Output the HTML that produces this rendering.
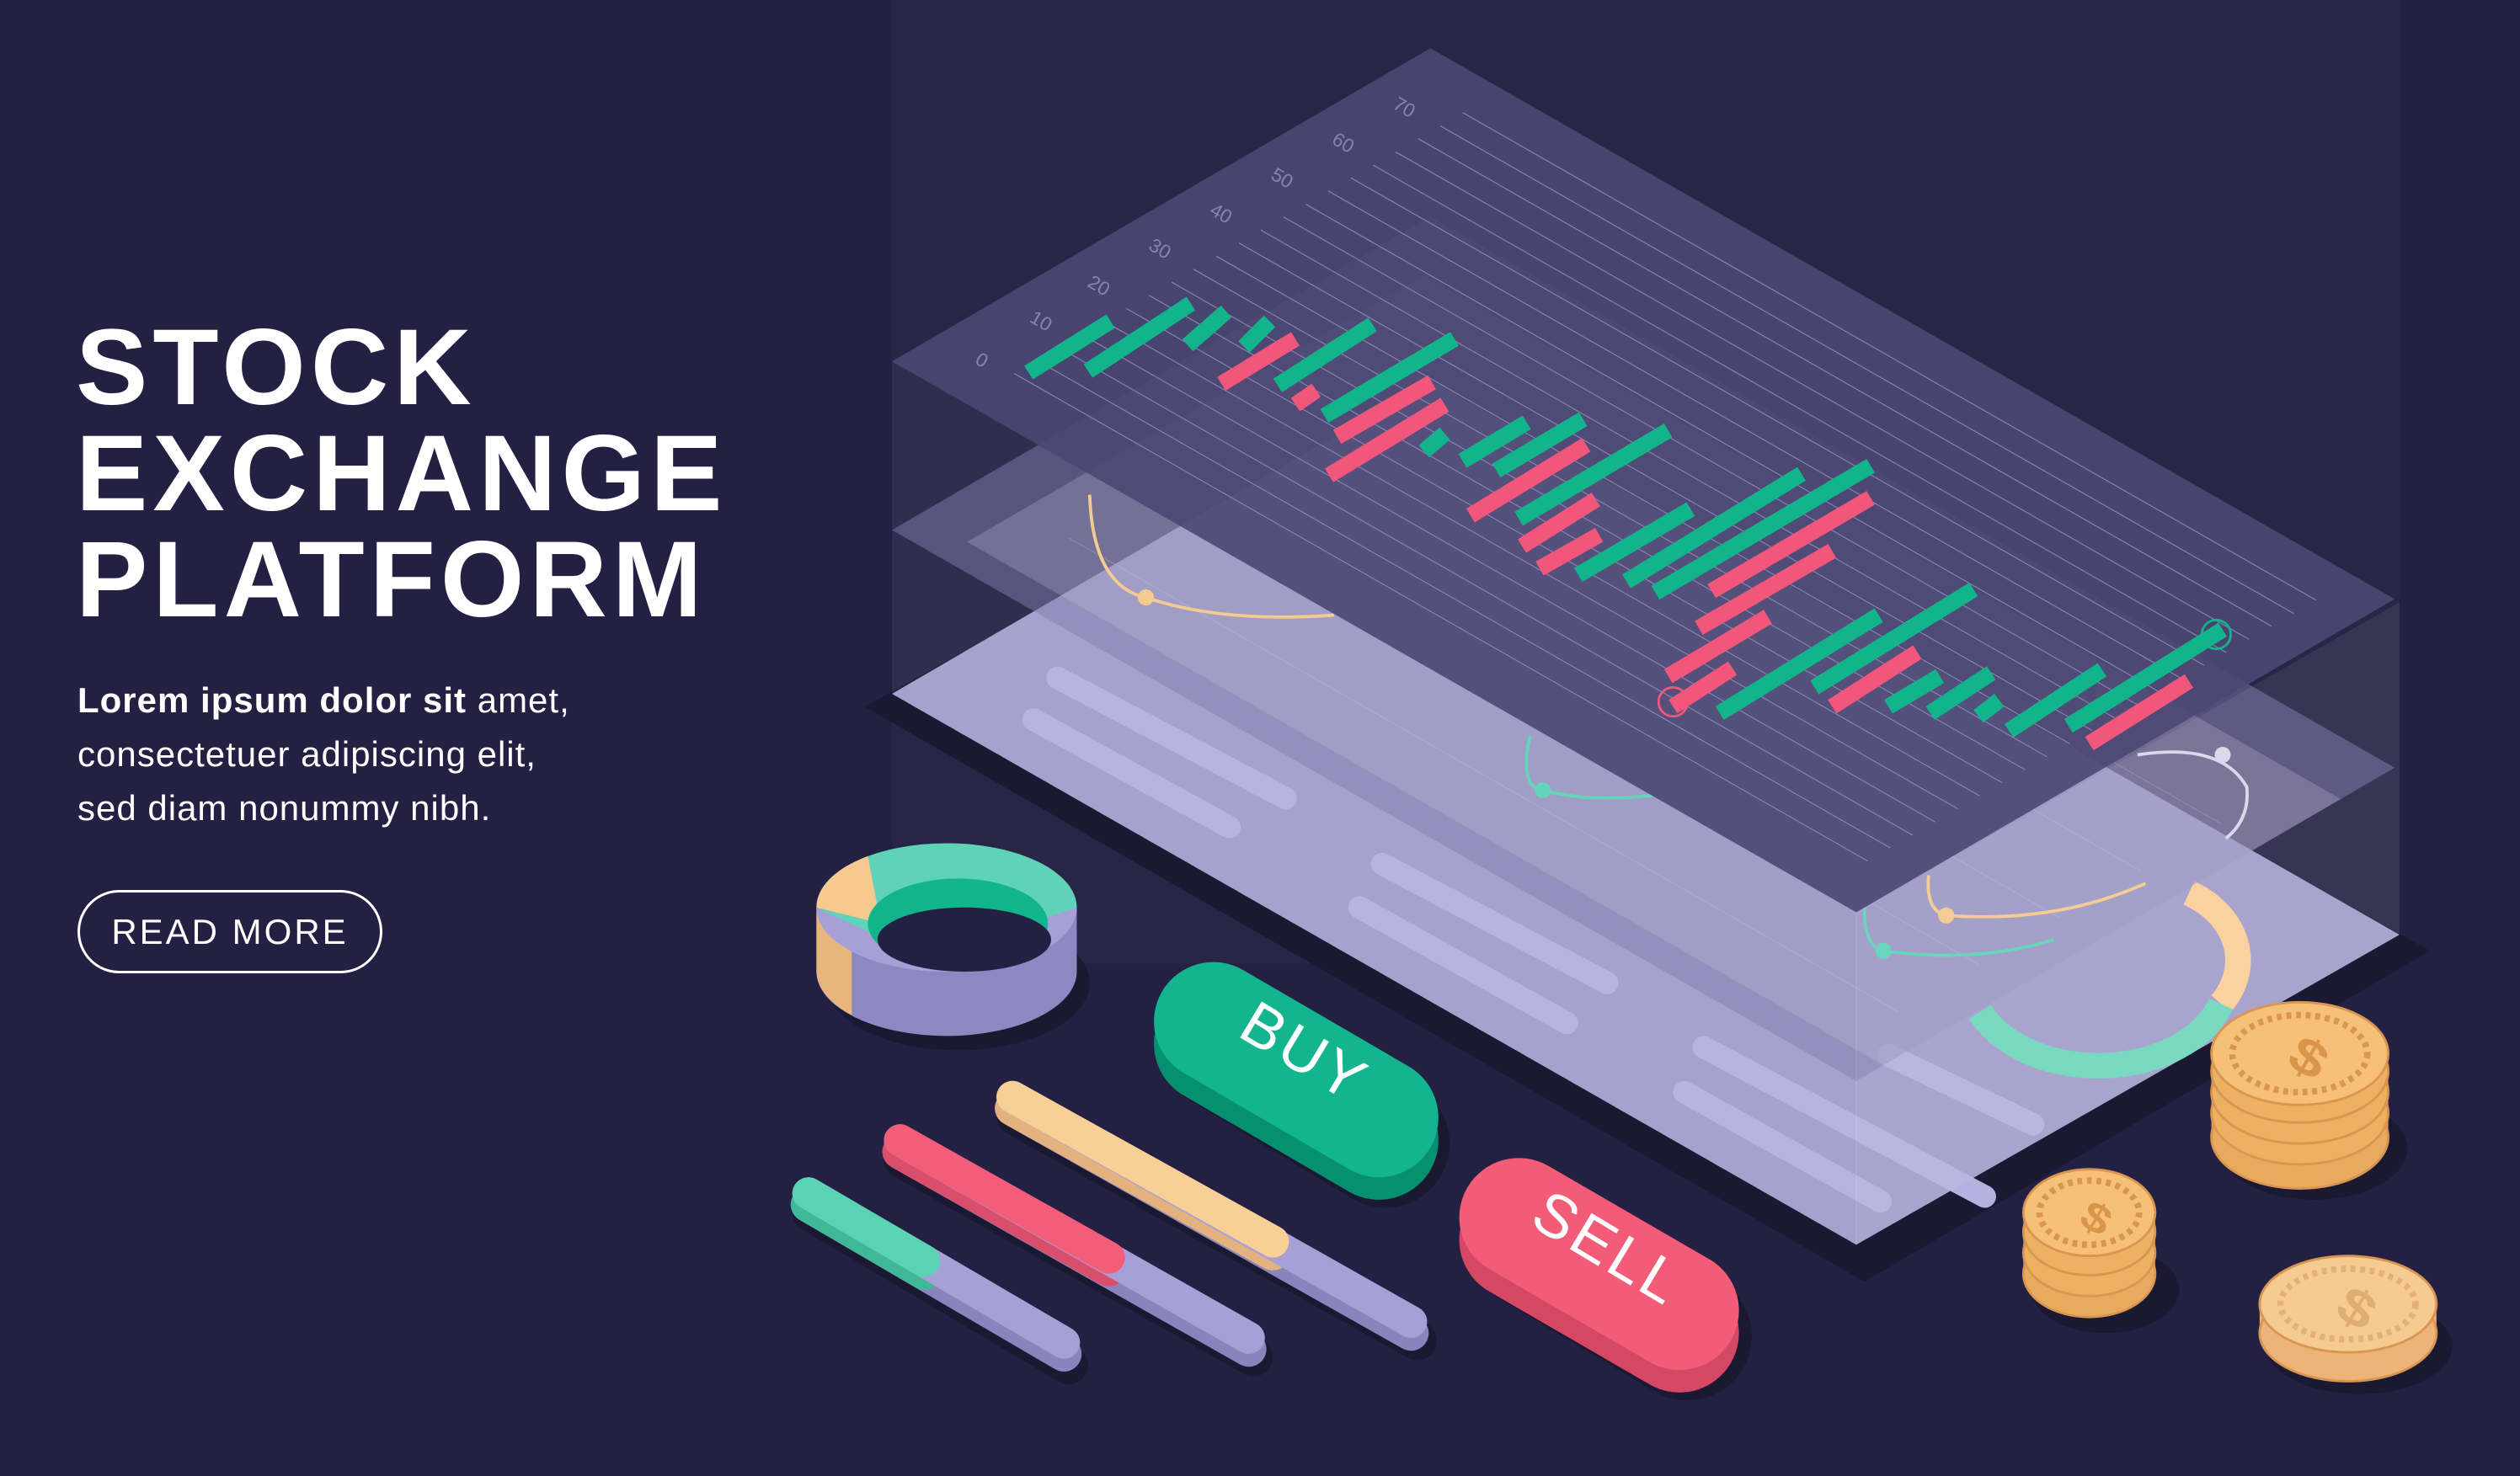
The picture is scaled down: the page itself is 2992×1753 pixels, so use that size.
<!DOCTYPE html>
<html><head><meta charset="utf-8"><style>
html,body{margin:0;padding:0;}
body{width:2992px;height:1753px;background:#242043;position:relative;overflow:hidden;font-family:"Liberation Sans",sans-serif;color:#fff;}
svg{position:absolute;left:0;top:0;}
.h{position:absolute;left:90px;top:374px;font-weight:bold;font-size:128px;line-height:126px;letter-spacing:6px;}
.p{position:absolute;left:92px;top:800px;font-size:42px;line-height:64px;letter-spacing:1px;}
.btn{position:absolute;left:92px;top:1057px;width:356px;height:93px;border:3px solid #fff;border-radius:50px;font-size:42px;line-height:93px;text-align:center;letter-spacing:3px;}
</style></head><body>
<svg width="2992" height="1753" viewBox="0 0 1568 919" preserveAspectRatio="none">
<rect x="555" y="0" width="938" height="600" fill="#fff" opacity="0.025"/>
<polygon points="538,440 890,245 1512,592 1160,798" fill="#1b1832"/>
<polygon points="555,432 890,237 1493,582 1155,775" fill="#a39ecb"/>
<g stroke="#b6b1de" stroke-width="14" stroke-linecap="round" fill="none">
<line x1="658" y1="422" x2="800" y2="497"/>
<line x1="643" y1="448" x2="765" y2="515"/>
<line x1="860" y1="538" x2="1000" y2="612"/>
<line x1="846" y1="565" x2="975" y2="637"/>
<line x1="1060" y1="652" x2="1235" y2="745"/>
<line x1="1048" y1="680" x2="1170" y2="748"/>
<line x1="1175" y1="657" x2="1265" y2="700"/>
</g>
<path d="M1362,556 A60,48 0 0 1 1382,625" stroke="#f9cf98" stroke-width="16" fill="none"/>
<path d="M1382,625 A80,55 0 0 1 1232,630" stroke="#6fd8bd" stroke-width="16" fill="none"/>
<!-- middle plane -->
<g transform="matrix(6,3.43,3.35,-1.95,555,330)">
<polygon points="0,0 100,0 100,100 0,100" fill="#7d78aa" opacity="0.5"/>
<polygon points="5,5 100,5 100,90 5,90" fill="#c8c4e0" opacity="0.25"/>
<g stroke="#d0cce8" stroke-opacity="0.3">
<line x1="10" y1="15" x2="96" y2="15" vector-effect="non-scaling-stroke"/>
<line x1="10" y1="30" x2="96" y2="30" vector-effect="non-scaling-stroke"/>
<line x1="10" y1="45" x2="96" y2="45" vector-effect="non-scaling-stroke"/>
<line x1="10" y1="60" x2="96" y2="60" vector-effect="non-scaling-stroke"/>
<line x1="10" y1="75" x2="96" y2="75" vector-effect="non-scaling-stroke"/>
</g>
</g>
<g fill="none" stroke-width="2">
<path d="M678,308 Q680,365 713,372 Q760,388 830,383" stroke="#f6c98e"/>
<path d="M952,458 Q945,490 960,492 Q990,500 1030,495" stroke="#5fd3b8"/>
<path d="M1330,470 Q1382,462 1398,490 Q1400,510 1385,522" stroke="#d8d6ea"/>
<path d="M1200,545 Q1198,568 1212,570 Q1280,575 1335,550" stroke="#f6c98e"/>
<path d="M1160,565 Q1160,590 1172,592 Q1230,600 1278,585" stroke="#5fd3b8"/>
</g>
<g>
<circle cx="713" cy="372" r="5" fill="#f6c98e"/>
<circle cx="960" cy="492" r="5" fill="#5fd3b8"/>
<circle cx="1383" cy="470" r="5" fill="#d8d6ea"/>
<circle cx="1211" cy="570" r="5" fill="#f6c98e"/>
<circle cx="1172" cy="592" r="5" fill="#5fd3b8"/>
</g>
<!-- top plane -->
<g transform="matrix(6,3.43,3.35,-1.95,555,225)">
<polygon points="0,0 100,0 100,100 0,100" fill="#4c4773" opacity="0.9"/>
<g stroke="#8d88b8" stroke-opacity="0.9" stroke-width="1.2">
<line x1="7.5" y1="9.3" x2="96" y2="9.3" vector-effect="non-scaling-stroke"/>
<line x1="7.5" y1="13.5" x2="96" y2="13.5" vector-effect="non-scaling-stroke"/>
<line x1="7.5" y1="17.6" x2="96" y2="17.6" vector-effect="non-scaling-stroke"/>
<line x1="7.5" y1="21.8" x2="96" y2="21.8" vector-effect="non-scaling-stroke"/>
<line x1="7.5" y1="26.0" x2="96" y2="26.0" vector-effect="non-scaling-stroke"/>
<line x1="7.5" y1="30.1" x2="96" y2="30.1" vector-effect="non-scaling-stroke"/>
<line x1="7.5" y1="34.3" x2="96" y2="34.3" vector-effect="non-scaling-stroke"/>
<line x1="7.5" y1="38.5" x2="96" y2="38.5" vector-effect="non-scaling-stroke"/>
<line x1="7.5" y1="42.6" x2="96" y2="42.6" vector-effect="non-scaling-stroke"/>
<line x1="7.5" y1="46.8" x2="96" y2="46.8" vector-effect="non-scaling-stroke"/>
<line x1="7.5" y1="51.0" x2="96" y2="51.0" vector-effect="non-scaling-stroke"/>
<line x1="7.5" y1="55.1" x2="96" y2="55.1" vector-effect="non-scaling-stroke"/>
<line x1="7.5" y1="59.3" x2="96" y2="59.3" vector-effect="non-scaling-stroke"/>
<line x1="7.5" y1="63.4" x2="96" y2="63.4" vector-effect="non-scaling-stroke"/>
<line x1="7.5" y1="67.6" x2="96" y2="67.6" vector-effect="non-scaling-stroke"/>
<line x1="7.5" y1="71.8" x2="96" y2="71.8" vector-effect="non-scaling-stroke"/>
<line x1="7.5" y1="75.9" x2="96" y2="75.9" vector-effect="non-scaling-stroke"/>
<line x1="7.5" y1="80.1" x2="96" y2="80.1" vector-effect="non-scaling-stroke"/>
<line x1="7.5" y1="84.3" x2="96" y2="84.3" vector-effect="non-scaling-stroke"/>
<line x1="7.5" y1="88.4" x2="96" y2="88.4" vector-effect="non-scaling-stroke"/>
<line x1="7.5" y1="92.6" x2="96" y2="92.6" vector-effect="non-scaling-stroke"/>
</g>
</g>
<!-- candles -->
<g stroke-width="10" stroke="#12b48c">
<line x1="640" y1="232" x2="691" y2="200"/>
<line x1="677" y1="231" x2="741" y2="189"/>
<line x1="739" y1="215" x2="763" y2="194"/>
<line x1="774" y1="216" x2="790" y2="200"/>
<line x1="795" y1="240" x2="854" y2="202"/>
<line x1="824" y1="259" x2="905" y2="211"/>
<line x1="886" y1="281" x2="899" y2="270"/>
<line x1="910" y1="287" x2="950" y2="263"/>
<line x1="931" y1="293" x2="985" y2="261"/>
<line x1="945" y1="323" x2="1038" y2="268"/>
<line x1="982" y1="358" x2="1052" y2="317"/>
<line x1="1012" y1="362" x2="1121" y2="295"/>
<line x1="1030" y1="369" x2="1164" y2="290"/>
<line x1="1070" y1="444" x2="1169" y2="383"/>
<line x1="1129" y1="428" x2="1228" y2="367"/>
<line x1="1175" y1="440" x2="1207" y2="421"/>
<line x1="1201" y1="444" x2="1239" y2="419"/>
<line x1="1231" y1="446" x2="1244" y2="436"/>
<line x1="1250" y1="455" x2="1308" y2="417"/>
<line x1="1287" y1="452" x2="1383" y2="392"/>
</g>
<g stroke-width="10" stroke="#f0577a">
<line x1="760" y1="239" x2="806" y2="211"/>
<line x1="806" y1="252" x2="819" y2="243"/>
<line x1="832" y1="272" x2="891" y2="238"/>
<line x1="827" y1="296" x2="899" y2="252"/>
<line x1="915" y1="321" x2="987" y2="277"/>
<line x1="947" y1="340" x2="993" y2="311"/>
<line x1="958" y1="354" x2="995" y2="333"/>
<line x1="1065" y1="368" x2="1164" y2="310"/>
<line x1="1057" y1="391" x2="1140" y2="343"/>
<line x1="1038" y1="421" x2="1100" y2="384"/>
<line x1="1041" y1="440" x2="1078" y2="416"/>
<line x1="1140" y1="440" x2="1193" y2="406"/>
<line x1="1300" y1="463" x2="1362" y2="424"/>
</g>
<circle cx="1041" cy="437" r="9" fill="none" stroke="#f0577a" stroke-width="1.5"/>
<circle cx="1379" cy="395" r="9" fill="none" stroke="#12b48c" stroke-width="1.5"/>
<g font-family="Liberation Sans" font-size="12" fill="#c8c3e6" fill-opacity="0.5">
<text transform="translate(606,226) rotate(30)">0</text>
<text transform="translate(640,200) rotate(30)">10</text>
<text transform="translate(676,178) rotate(30)">20</text>
<text transform="translate(714,155) rotate(30)">30</text>
<text transform="translate(752,133) rotate(30)">40</text>
<text transform="translate(790,111) rotate(30)">50</text>
<text transform="translate(828,89) rotate(30)">60</text>
<text transform="translate(866,67) rotate(30)">70</text>
</g>
<polygon points="555,225 1155,568 1155,775 555,432" fill="#fff" opacity="0.04"/>
<polygon points="1155,568 1493,375 1493,582 1155,775" fill="#fff" opacity="0.07"/>
<line x1="1155" y1="568" x2="1155" y2="775" stroke="#fff" stroke-opacity="0.1"/>
<!-- ring -->
<ellipse cx="596" cy="612" rx="82" ry="42" fill="#1b1832"/>
<rect x="508" y="565" width="162" height="40" fill="#8d87c2"/>
<ellipse cx="589" cy="605" rx="81" ry="40" fill="#8d87c2"/>
<path d="M508,565 L508,605 A81,40 0 0 0 530,632 L530,592 Z" fill="#e8b67c"/>
<ellipse cx="589" cy="565" rx="81" ry="40" fill="#5fd3b8"/>
<path d="M508,565 A81,40 0 0 1 540,533 L548,575 Z" fill="#f6c98e"/>
<path d="M508,565 A81,40 0 0 0 589,605 A81,40 0 0 0 670,565 L640,575 A52,25 0 0 1 540,580 Z" fill="#a6a0d6"/>
<ellipse cx="596" cy="575" rx="56" ry="28" fill="#12b48c"/>
<ellipse cx="600" cy="585" rx="54" ry="20" fill="#242043"/>
<!-- sticks -->
<g stroke-linecap="round" fill="none">
<line x1="505" y1="755" x2="665" y2="850" stroke="#1b1832" stroke-width="24"/>
<line x1="562" y1="722" x2="780" y2="845" stroke="#1b1832" stroke-width="24"/>
<line x1="632" y1="695" x2="882" y2="835" stroke="#1b1832" stroke-width="24"/>
<line x1="503" y1="750" x2="662" y2="843" stroke="#8a84bd" stroke-width="22"/>
<line x1="503" y1="750" x2="575" y2="792" stroke="#3fb898" stroke-width="22"/>
<line x1="503" y1="743" x2="662" y2="836" stroke="#a6a0d6" stroke-width="20"/>
<line x1="503" y1="743" x2="575" y2="785" stroke="#5ad3b4" stroke-width="20"/>
<line x1="560" y1="717" x2="777" y2="840" stroke="#8a84bd" stroke-width="22"/>
<line x1="560" y1="717" x2="690" y2="790" stroke="#d94f6b" stroke-width="22"/>
<line x1="560" y1="710" x2="777" y2="833" stroke="#a6a0d6" stroke-width="20"/>
<line x1="560" y1="710" x2="690" y2="783" stroke="#f35d7a" stroke-width="20"/>
<line x1="630" y1="690" x2="878" y2="830" stroke="#8a84bd" stroke-width="22"/>
<line x1="630" y1="690" x2="792" y2="780" stroke="#e3b27e" stroke-width="22"/>
<line x1="630" y1="683" x2="878" y2="823" stroke="#a6a0d6" stroke-width="20"/>
<line x1="630" y1="683" x2="792" y2="773" stroke="#f9cf98" stroke-width="20"/>
</g>
<g stroke-linecap="round">
<line x1="760" y1="650" x2="862" y2="712" stroke="#1b1832" stroke-width="80"/>
<line x1="755" y1="650" x2="858" y2="710" stroke="#079070" stroke-width="74"/>
<line x1="755" y1="636" x2="858" y2="696" stroke="#12b58d" stroke-width="74"/>
<line x1="950" y1="772" x2="1050" y2="832" stroke="#1b1832" stroke-width="80"/>
<line x1="945" y1="772" x2="1045" y2="830" stroke="#d44864" stroke-width="74"/>
<line x1="945" y1="758" x2="1045" y2="816" stroke="#f25c77" stroke-width="74"/>
</g>
<text transform="translate(805,666) rotate(31)" text-anchor="middle" font-family="Liberation Sans" font-size="38" fill="#fff" letter-spacing="2">BUY</text>
<text transform="translate(994,788) rotate(31)" text-anchor="middle" font-family="Liberation Sans" font-size="38" fill="#fff" letter-spacing="2">SELL</text>
<!-- coins -->
<ellipse cx="1440" cy="715" rx="58" ry="32" fill="#1b1832"/>
<ellipse cx="1310" cy="803" rx="46" ry="27" fill="#1b1832"/>
<ellipse cx="1468" cy="838" rx="58" ry="30" fill="#1b1832"/>
<g stroke="#d89650" stroke-width="1.5">
<rect x="1376" y="656" width="110" height="52" fill="#e9a95e" stroke="none"/>
<ellipse cx="1431" cy="708" rx="55" ry="32" fill="#e9a95e"/>
<ellipse cx="1431" cy="693" rx="55" ry="32" fill="#eeb063"/>
<ellipse cx="1431" cy="680" rx="55" ry="32" fill="#eeb063"/>
<ellipse cx="1431" cy="667" rx="55" ry="32" fill="#eeb063"/>
<ellipse cx="1431" cy="656" rx="55" ry="32" fill="#f7c078"/>
<ellipse cx="1431" cy="656" rx="42" ry="24" fill="none" stroke-dasharray="3 3" stroke-width="4"/>
<rect x="1259" y="755" width="82" height="38" fill="#e9a95e" stroke="none"/>
<ellipse cx="1300" cy="793" rx="41" ry="27" fill="#e9a95e"/>
<ellipse cx="1300" cy="780" rx="41" ry="27" fill="#eeb063"/>
<ellipse cx="1300" cy="767" rx="41" ry="27" fill="#eeb063"/>
<ellipse cx="1300" cy="755" rx="41" ry="27" fill="#f7c078"/>
<ellipse cx="1300" cy="755" rx="31" ry="20" fill="none" stroke-dasharray="3 3" stroke-width="4"/>
<rect x="1406" y="812" width="110" height="18" fill="#ecb478" stroke="none"/>
<ellipse cx="1461" cy="830" rx="55" ry="30" fill="#ecb478"/>
<ellipse cx="1461" cy="812" rx="55" ry="30" fill="#f5cb92"/>
<ellipse cx="1461" cy="812" rx="42" ry="22" fill="none" stroke="#e4b07a" stroke-dasharray="3 3" stroke-width="4"/>
</g>
<g font-family="Liberation Sans" font-weight="bold" text-anchor="middle" fill="#d9954a">
<text transform="translate(1431,668) rotate(30) scale(1,0.8)" font-size="40">$</text>
<text transform="translate(1300,766) rotate(30) scale(1,0.8)" font-size="32">$</text>
<text transform="translate(1461,824) rotate(30) scale(1,0.8)" font-size="40" fill="#e0ad72">$</text>
</g>
</svg>
<div class="h">STOCK<br>EXCHANGE<br>PLATFORM</div>
<div class="p"><b>Lorem ipsum dolor sit</b> amet,<br>consectetuer adipiscing elit,<br>sed diam nonummy nibh.</div>
<div class="btn">READ MORE</div>
</body></html>
